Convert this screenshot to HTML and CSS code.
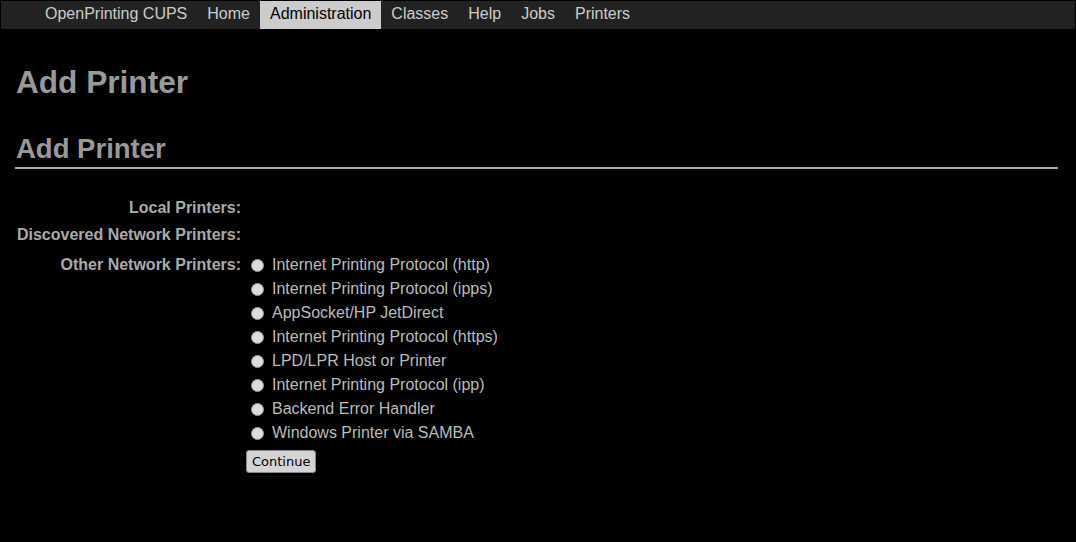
FILE: index.html
```html
<!DOCTYPE html>
<html lang="en">
  <head>
    <meta charset="UTF-8" />
    <title>Add Printer - CUPS</title>
    <link rel="stylesheet" href="styles.css">
  </head>
  <body>
    <!-- top navigation -->
    <div class="navbar">
      <a class="nav-item" href="#">OpenPrinting CUPS</a>
      <a class="nav-item" href="#">Home</a>
      <a class="nav-item active" href="#">Administration</a>
      <a class="nav-item" href="#">Classes</a>
      <a class="nav-item" href="#">Help</a>
      <a class="nav-item" href="#">Jobs</a>
      <a class="nav-item" href="#">Printers</a>
    </div>

    <div class="main-content">
      <h1>Add Printer</h1>
      <h2 class="section-title">Add Printer</h2>

      <form class="printer-form">
        <div class="form-row">
          <div class="form-label">Local Printers:</div>
          <div class="form-value"></div>
        </div>
        <div class="form-row">
          <div class="form-label">Discovered Network Printers:</div>
          <div class="form-value"></div>
        </div>
        <div class="form-row other">
          <div class="form-label">Other Network Printers:</div>
          <div class="form-value">
            <label class="option"><input type="radio" name="device">Internet Printing Protocol (http)</label>
            <label class="option"><input type="radio" name="device">Internet Printing Protocol (ipps)</label>
            <label class="option"><input type="radio" name="device">AppSocket/HP JetDirect</label>
            <label class="option"><input type="radio" name="device">Internet Printing Protocol (https)</label>
            <label class="option"><input type="radio" name="device">LPD/LPR Host or Printer</label>
            <label class="option"><input type="radio" name="device">Internet Printing Protocol (ipp)</label>
            <label class="option"><input type="radio" name="device">Backend Error Handler</label>
            <label class="option"><input type="radio" name="device">Windows Printer via SAMBA</label>
            <button type="button" class="continue-button">Continue</button>
          </div>
        </div>
      </form>
    </div>
  </body>
</html>
```

FILE: styles.css
```css
/* general */
body {
  margin: 0;
  padding: 0;
  background-color: #000;
  color: #aaa;
  font-family: "Liberation Sans", Arial, sans-serif;
  font-size: 16px;
}

/* navbar */
.navbar {
  display: flex;
  height: 28px;
  margin: 1px 1px 0 1px;
  padding-left: 34px;
  background-color: #222;
}

.nav-item {
  padding: 0 10px;
  line-height: 25px;
  color: #ccc;
  text-decoration: none;
}

.nav-item.active {
  background-color: #ccc;
  color: #000;
}

/* content */
.main-content {
  margin: 0 18px 0 15px;
  padding-left: 1px;
}

h1 {
  margin: 35px 0 0 0;
  font-size: 31.6px;
  line-height: 37px;
  color: #999;
}

.section-title {
  margin: 32px 0 0 -1px;
  padding: 0 0 2px 1px;
  font-size: 27.5px;
  line-height: 32px;
  color: #999;
  border-bottom: 2px solid #aaa;
}

/* add printer form */
.printer-form {
  margin-top: 30px;
}

.form-row {
  display: flex;
  gap: 5px;
}

.form-label {
  width: 225px;
  text-align: right;
  font-weight: bold;
  line-height: 18px;
  padding-bottom: 9px;
}

.form-row.other .form-label {
  line-height: 24px;
}

.form-value {
  display: flex;
  flex-direction: column;
  align-items: flex-start;
}

.option {
  display: flex;
  align-items: center;
  height: 24px;
  color: #bbb;
}

.option input {
  appearance: none;
  width: 13px;
  height: 13px;
  margin: 0 8px 0 5px;
  background-color: #ddd;
  border: 1px solid #999;
  border-radius: 50%;
}

.continue-button {
  margin-top: 5px;
  height: 23px;
  padding: 0 5px;
  font-family: "DejaVu Sans", sans-serif;
  font-size: 13px;
  color: #000;
  background-color: #d4d4d4;
  border: 1px solid #888;
  border-radius: 3px;
}
```
